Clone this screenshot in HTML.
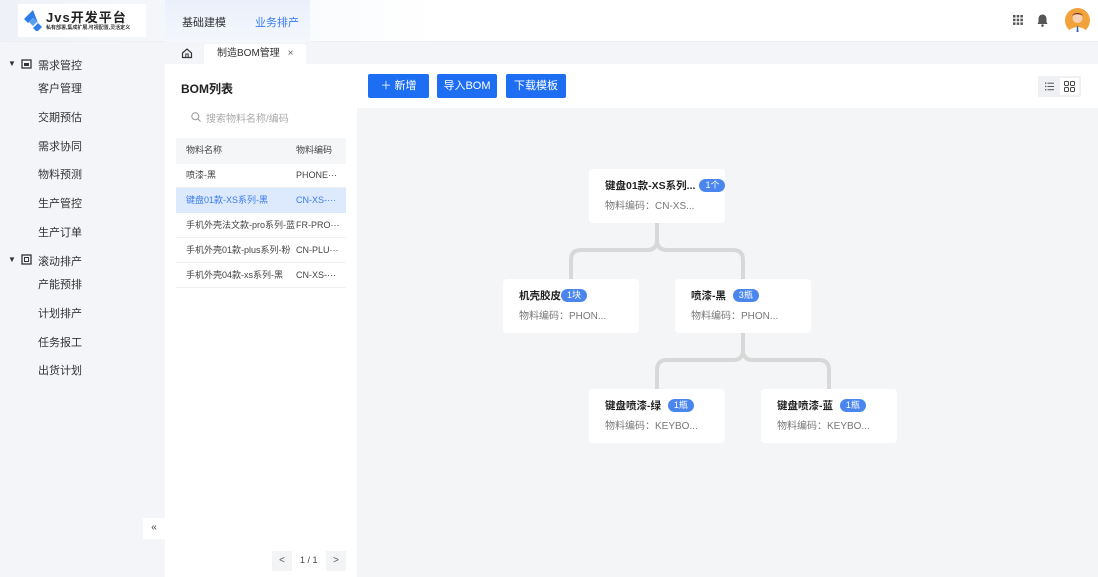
<!DOCTYPE html>
<html><head><meta charset="utf-8"><style>
*{box-sizing:border-box;margin:0;padding:0}
body{width:1098px;height:577px;overflow:hidden;font-family:"Liberation Sans","Noto Sans CJK SC",sans-serif;background:#f3f5f8;position:relative;color:#333}
.abs{position:absolute;white-space:nowrap}
.hdr{left:0;top:0;width:1098px;height:42px;background:linear-gradient(90deg,#eef2f8,#fff 40%,#fff);border-bottom:1px solid #eceef2}
.logo{left:18px;top:4px;width:128px;height:33px;background:#fff}
.side{left:0;top:42px;width:165px;height:535px;background:#f3f5f8}
.it{left:38px;font-size:11px;color:#333}
.lp{left:165px;top:64px;width:192px;height:513px;background:#fff}
.btn{top:74px;height:24px;background:#1e6ef4;color:#fff;font-size:11px;border-radius:2px;text-align:center;line-height:24px}
.card{width:136px;height:54px;background:#fff;border-radius:4px;font-size:10px}
.card b{position:absolute;left:16px;top:9px;font-size:10.5px;color:#222;white-space:nowrap}
.card span.c{position:absolute;left:16px;top:28px;color:#777;white-space:nowrap;font-size:10px}
.tag{display:inline-block;background:#4a86ee;color:#fff;border-radius:8px;font-size:9px;font-weight:normal;padding:0 6px;line-height:13px;margin-left:4px;vertical-align:1px}
.row{left:11px;width:170px;height:25px;font-size:9px;line-height:25px;color:#444}
.row .a{position:absolute;left:10px}.row .b{position:absolute;left:120px}
</style></head><body>
<div class="abs hdr"></div>
<div class="abs" style="left:165px;top:0;width:145px;height:42px;background:linear-gradient(#eaf0fb,#f4f7fc)"></div>
<div class="abs logo">
<svg class="abs" style="left:4px;top:5px" width="22" height="22" viewBox="0 0 22 22"><path d="M11 1L2 10l4 4 5-5 5 5-5 5 4 4 5-5-4-4z" fill="#2f7de9"/><path d="M11 9l-4 4 4 4 4-4z" fill="#5aa0f0"/></svg>
<div class="abs" style="left:28px;top:3px;font-size:13px;font-weight:bold;color:#222;letter-spacing:1px">Jvs开发平台</div>
<div class="abs" style="left:28px;top:20px;font-size:5px;color:#333;font-weight:bold;white-space:nowrap">私有部署,集成扩展,可视配置,灵活定义</div>
</div>
<div class="abs" style="left:182px;top:14px;font-size:11px;color:#333">基础建模</div>
<div class="abs" style="left:255px;top:14px;font-size:11px;color:#3b7cf0">业务排产</div>
<svg class="abs" style="left:1013px;top:15px" width="10" height="10"><g fill="#555"><rect x="0" y="0" width="2.5" height="2.5"/><rect x="3.7" y="0" width="2.5" height="2.5"/><rect x="7.4" y="0" width="2.5" height="2.5"/><rect x="0" y="3.7" width="2.5" height="2.5"/><rect x="3.7" y="3.7" width="2.5" height="2.5"/><rect x="7.4" y="3.7" width="2.5" height="2.5"/><rect x="0" y="7.4" width="2.5" height="2.5"/><rect x="3.7" y="7.4" width="2.5" height="2.5"/><rect x="7.4" y="7.4" width="2.5" height="2.5"/></g></svg>
<svg class="abs" style="left:1037px;top:14px" width="11" height="13"><path d="M5.5 0.5c-2.5 0-4 2-4 4.5v3L0.5 10h10L9.5 8V5c0-2.5-1.5-4.5-4-4.5z" fill="#555"/><circle cx="5.5" cy="11.5" r="1.3" fill="#555"/></svg>
<svg class="abs" style="left:1065px;top:8px" width="25" height="25"><circle cx="12.5" cy="12.5" r="12.5" fill="#f2a23a"/><circle cx="12.5" cy="10" r="5" fill="#f7d2b5"/><path d="M7.5 8c0-4 10-4 10 0l-1 -1c-2-1-6-1-8 0z" fill="#7a2e1e"/><path d="M4 23c2-5 15-5 17 0a12.5 12.5 0 0 1-17 0z" fill="#fff"/><path d="M12 18h1l0.5 6h-2z" fill="#2c5ec8"/></svg>
<div class="abs side"></div>
<div class="abs" style="left:8px;top:59px;font-size:8px;color:#333">▼</div>
<svg class="abs" style="left:21px;top:58px" width="11" height="11"><rect x="1" y="2" width="9" height="8" fill="none" stroke="#333" stroke-width="1.3"/><rect x="3" y="5" width="5" height="3" fill="#333"/></svg>
<div class="abs" style="left:38px;top:57px;font-size:11px">需求管控</div>
<div class="abs it" style="top:80px">客户管理</div>
<div class="abs it" style="top:109px">交期预估</div>
<div class="abs it" style="top:138px">需求协同</div>
<div class="abs it" style="top:166px">物料预测</div>
<div class="abs it" style="top:195px">生产管控</div>
<div class="abs it" style="top:224px">生产订单</div>
<div class="abs" style="left:8px;top:255px;font-size:8px;color:#333">▼</div>
<svg class="abs" style="left:21px;top:254px" width="11" height="11"><rect x="1" y="1" width="9" height="9" fill="none" stroke="#333" stroke-width="1.3"/><rect x="3.5" y="3.5" width="4" height="4" fill="none" stroke="#333"/></svg>
<div class="abs" style="left:38px;top:253px;font-size:11px">滚动排产</div>
<div class="abs it" style="top:276px">产能预排</div>
<div class="abs it" style="top:305px">计划排产</div>
<div class="abs it" style="top:334px">任务报工</div>
<div class="abs it" style="top:362px">出货计划</div>
<div class="abs" style="left:143px;top:518px;width:22px;height:21px;background:#fff;font-size:10px;text-align:center;line-height:20px;color:#444">«</div>
<svg class="abs" style="left:181px;top:47px" width="12" height="12"><path d="M1.5 6L6 2l4.5 4v4.5h-9z" fill="none" stroke="#333" stroke-width="1.2"/><rect x="4.8" y="7" width="2.4" height="3.5" fill="none" stroke="#333"/></svg>
<div class="abs" style="left:204px;top:44px;width:102px;height:20px;background:#fff;border-radius:3px 3px 0 0;font-size:10px;line-height:20px;padding-left:13px;color:#333">制造BOM管理 <span style="margin-left:5px;color:#666">×</span></div>
<div class="abs lp"></div>
<div class="abs" style="left:181px;top:80px;font-size:12px;font-weight:bold;color:#222">BOM列表</div>
<svg class="abs" style="left:191px;top:112px" width="10" height="10"><circle cx="4.3" cy="4.3" r="3.5" fill="none" stroke="#999" stroke-width="1"/><path d="M7 7l2.5 2.5" stroke="#999"/></svg>
<div class="abs" style="left:206px;top:110px;font-size:10px;color:#aaa">搜索物料名称/编码</div>
<div class="abs" style="left:176px;top:138px;width:170px;height:26px;background:#f5f6f8"></div>
<div class="abs row" style="left:176px;top:138px"><span class="a">物料名称</span><span class="b">物料编码</span></div>
<div class="abs row" style="left:176px;top:163px;border-bottom:1px solid #f2f2f2"><span class="a">喷漆-黑</span><span class="b">PHONE···</span></div>
<div class="abs row" style="left:176px;top:188px;background:#dde9fd;color:#3b7cf0"><span class="a">键盘01款-XS系列-黑</span><span class="b">CN-XS-···</span></div>
<div class="abs row" style="left:176px;top:213px;border-bottom:1px solid #f2f2f2"><span class="a">手机外壳法文款-pro系列-蓝</span><span class="b">FR-PRO···</span></div>
<div class="abs row" style="left:176px;top:238px;border-bottom:1px solid #f2f2f2"><span class="a">手机外壳01款-plus系列-粉</span><span class="b">CN-PLU···</span></div>
<div class="abs row" style="left:176px;top:263px;border-bottom:1px solid #f2f2f2"><span class="a">手机外壳04款-xs系列-黑</span><span class="b">CN-XS-···</span></div>
<div class="abs" style="left:272px;top:551px;width:20px;height:20px;background:#f3f4f6;font-size:10px;text-align:center;line-height:20px;color:#555">&lt;</div>
<div class="abs" style="left:300px;top:555px;font-size:9px;color:#444">1 / 1</div>
<div class="abs" style="left:326px;top:551px;width:20px;height:20px;background:#f3f4f6;font-size:10px;text-align:center;line-height:20px;color:#555">&gt;</div>
<div class="abs" style="left:357px;top:64px;width:741px;height:513px;background:#f4f5f7"></div>
<div class="abs" style="left:357px;top:64px;width:741px;height:44px;background:#fff"></div>
<div class="abs btn" style="left:368px;width:61px">＋ 新增</div>
<div class="abs btn" style="left:437px;width:60px">导入BOM</div>
<div class="abs btn" style="left:506px;width:60px">下载模板</div>
<div class="abs" style="left:1038px;top:76px;width:43px;height:21px;background:#eef0f3;border-radius:2px"></div>
<div class="abs" style="left:1060px;top:78px;width:19px;height:17px;background:#fff"></div>
<svg class="abs" style="left:1045px;top:82px" width="9" height="9"><g fill="#555"><rect x="0" y="0.5" width="1.3" height="1.3"/><rect x="0" y="3.8" width="1.3" height="1.3"/><rect x="0" y="7" width="1.3" height="1.3"/><rect x="2.5" y="0.7" width="6.5" height="1"/><rect x="2.5" y="4" width="6.5" height="1"/><rect x="2.5" y="7.2" width="6.5" height="1"/></g></svg>
<svg class="abs" style="left:1064px;top:81px" width="11" height="11"><g fill="none" stroke="#444"><rect x="0.5" y="0.5" width="4" height="4" rx="1"/><rect x="6.5" y="0.5" width="4" height="4" rx="1"/><rect x="0.5" y="6.5" width="4" height="4" rx="1"/><rect x="6.5" y="6.5" width="4" height="4" rx="1"/></g></svg>
<svg class="abs" style="left:357px;top:108px" width="741" height="469"><g fill="none" stroke="#d8d8d8" stroke-width="4"><path d="M300 115v17q0 10-10 10H224q-10 0-10 10v19"/><path d="M300 115v17q0 10 10 10h66q10 0 10 10v19"/><path d="M386 225v17q0 10-10 10H310q-10 0-10 10v19"/><path d="M386 225v17q0 10 10 10h66q10 0 10 10v19"/></g></svg>
<div class="abs card" style="left:589px;top:169px"><b>键盘01款-XS系列...<span class="tag">1个</span></b><span class="c">物料编码：CN-XS...</span></div>
<div class="abs card" style="left:503px;top:279px"><b>机壳胶皮<span class="tag" style="margin-left:0">1块</span></b><span class="c">物料编码：PHON...</span></div>
<div class="abs card" style="left:675px;top:279px"><b>喷漆-黑 <span class="tag">3瓶</span></b><span class="c">物料编码：PHON...</span></div>
<div class="abs card" style="left:589px;top:389px"><b>键盘喷漆-绿 <span class="tag">1瓶</span></b><span class="c">物料编码：KEYBO...</span></div>
<div class="abs card" style="left:761px;top:389px"><b>键盘喷漆-蓝 <span class="tag">1瓶</span></b><span class="c">物料编码：KEYBO...</span></div>
</body></html>
